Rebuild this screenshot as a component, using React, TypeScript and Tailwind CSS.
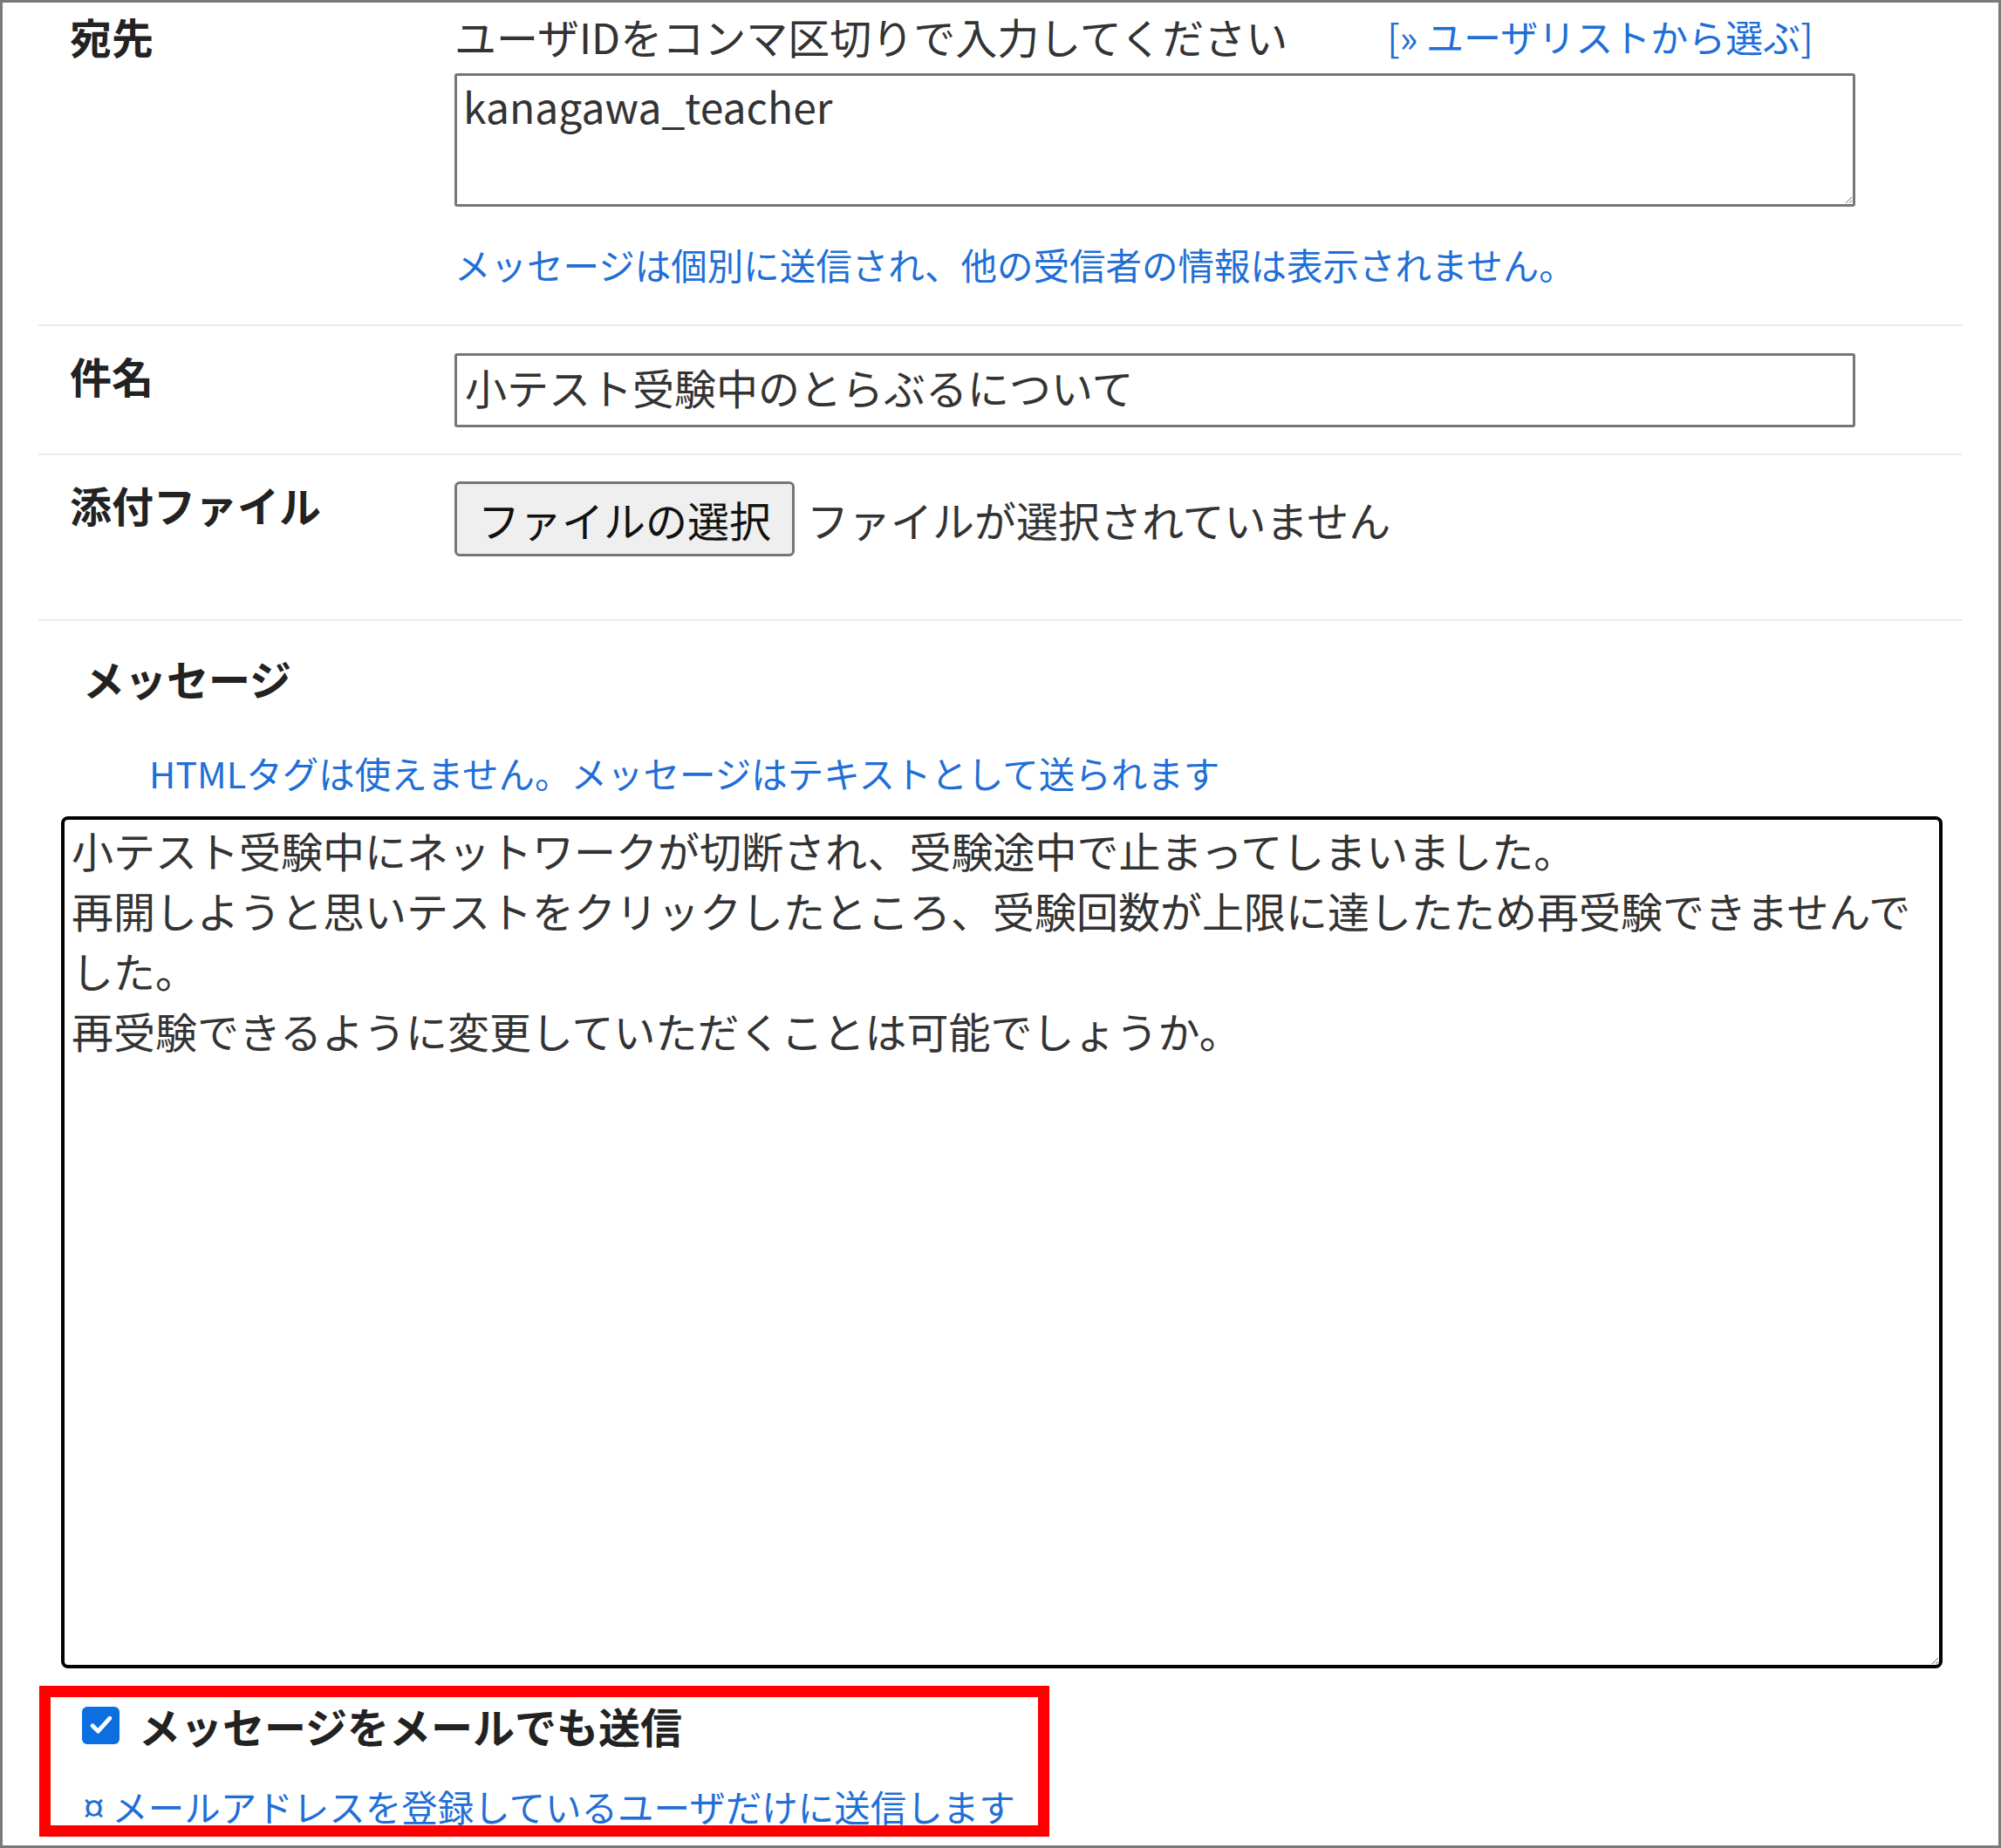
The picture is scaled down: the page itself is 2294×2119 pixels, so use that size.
import React from "react";

const message = `小テスト受験中にネットワークが切断され、受験途中で止まってしまいました。
再開しようと思いテストをクリックしたところ、受験回数が上限に達したため再受験できませんでした。
再受験できるように変更していただくことは可能でしょうか。`;

function Label({ text, className = "" }: { text: string; className?: string }) {
  return (
    <div className={`w-[477px] shrink-0 pl-[36px] text-[48px] leading-[64px] font-bold text-[#222] ${className}`}>
      {text}
    </div>
  );
}

export default function App() {
  return (
    <div className="w-[2294px] h-[2119px] overflow-hidden bg-white border-[3px] border-[#7a7a7a] font-['Noto_Sans_CJK_JP','Noto_Sans',sans-serif] text-[#333]">
      <div className="pl-[41px] pr-[41px] pt-[6px]">
        {/* 宛先 */}
        <div className="flex items-start border-b-2 border-[#ececec] pb-[41px]">
          <Label text="宛先" />
          <div className="flex flex-col">
            <div className="flex items-center h-[64px] whitespace-nowrap">
              <span className="text-[48px] leading-[64px]">ユーザIDをコンマ区切りで入力してください</span>
              <a className="ml-[114px] text-[43px] leading-[64px] text-[#1f6fd6]">[» ユーザリストから選ぶ]</a>
            </div>
            <textarea
              readOnly
              defaultValue="kanagawa_teacher"
              className="mt-[11px] w-[1606px] h-[153px] border-[3px] border-[#767676] rounded-[3px] px-[7px] py-[2px] text-[48px] leading-[64px] text-[#333] outline-none resize-y"
            />
            <div className="mt-[38px] text-[41.5px] leading-[56px] text-[#1f6fd6] whitespace-nowrap">
              メッセージは個別に送信され、他の受信者の情報は表示されません。
            </div>
          </div>
        </div>

        {/* 件名 */}
        <div className="flex items-start border-b-2 border-[#ececec]">
          <Label text="件名" className="pt-[24px]" />
          <div className="pt-[31px] pb-[30px]">
            <input
              readOnly
              defaultValue="小テスト受験中のとらぶるについて"
              className="w-[1606px] h-[85px] border-[3px] border-[#767676] rounded-[3px] px-[9px] pb-[10px] text-[48px] text-[#333] outline-none"
            />
          </div>
        </div>

        {/* 添付ファイル */}
        <div className="flex items-start border-b-2 border-[#ececec]">
          <Label text="添付ファイル" className="pt-[24px]" />
          <div className="flex items-center pt-[30px] pb-[72px]">
            <button className="h-[86px] px-[24px] bg-[#efefef] border-[3px] border-[#767676] rounded-[6px] text-[48px] leading-[64px] text-[#111]">
              ファイルの選択
            </button>
            <span className="ml-[14px] text-[48px] leading-[64px] text-[#333] whitespace-nowrap">ファイルが選択されていません</span>
          </div>
        </div>

        {/* メッセージ */}
        <div className="pt-[33px]">
          <div className="pl-[51px] text-[48px] leading-[64px] font-bold text-[#222]">メッセージ</div>
          <div className="mt-[49px] pl-[127px] text-[41.5px] leading-[56px] text-[#1f6fd6] whitespace-nowrap">
            HTMLタグは使えません。メッセージはテキストとして送られます
          </div>
          <textarea
            readOnly
            defaultValue={message}
            className="block mt-[22px] ml-[26px] w-[2157px] h-[977px] border-[4px] border-black rounded-[8px] px-[8px] pt-0 -mt-0 text-[48px] leading-[69px] text-[#333] outline-none resize-y"
          />

          <div className="mt-[20px] ml-[1px] w-[1158px] h-[173px] border-[13px] border-[#ff0000] overflow-hidden">
            <div className="flex items-center pt-0 pl-[36px]">
              <span className="w-[43px] h-[43px] rounded-[6px] bg-[#0b6fe0] flex items-center justify-center">
                <svg viewBox="0 0 24 24" className="w-[34px] h-[34px]" fill="none">
                  <path d="M5 12.5l4.5 4.5L19 6.5" stroke="white" strokeWidth="3.4" strokeLinecap="round" strokeLinejoin="round" />
                </svg>
              </span>
              <span className="ml-[22px] text-[48px] leading-[64px] font-bold text-[#222]">メッセージをメールでも送信</span>
            </div>
            <div className="mt-[33px] pl-[38px] text-[41.5px] leading-[56px] text-[#1f6fd6] whitespace-nowrap">
              ¤ メールアドレスを登録しているユーザだけに送信します
            </div>
          </div>
        </div>
      </div>
    </div>
  );
}
